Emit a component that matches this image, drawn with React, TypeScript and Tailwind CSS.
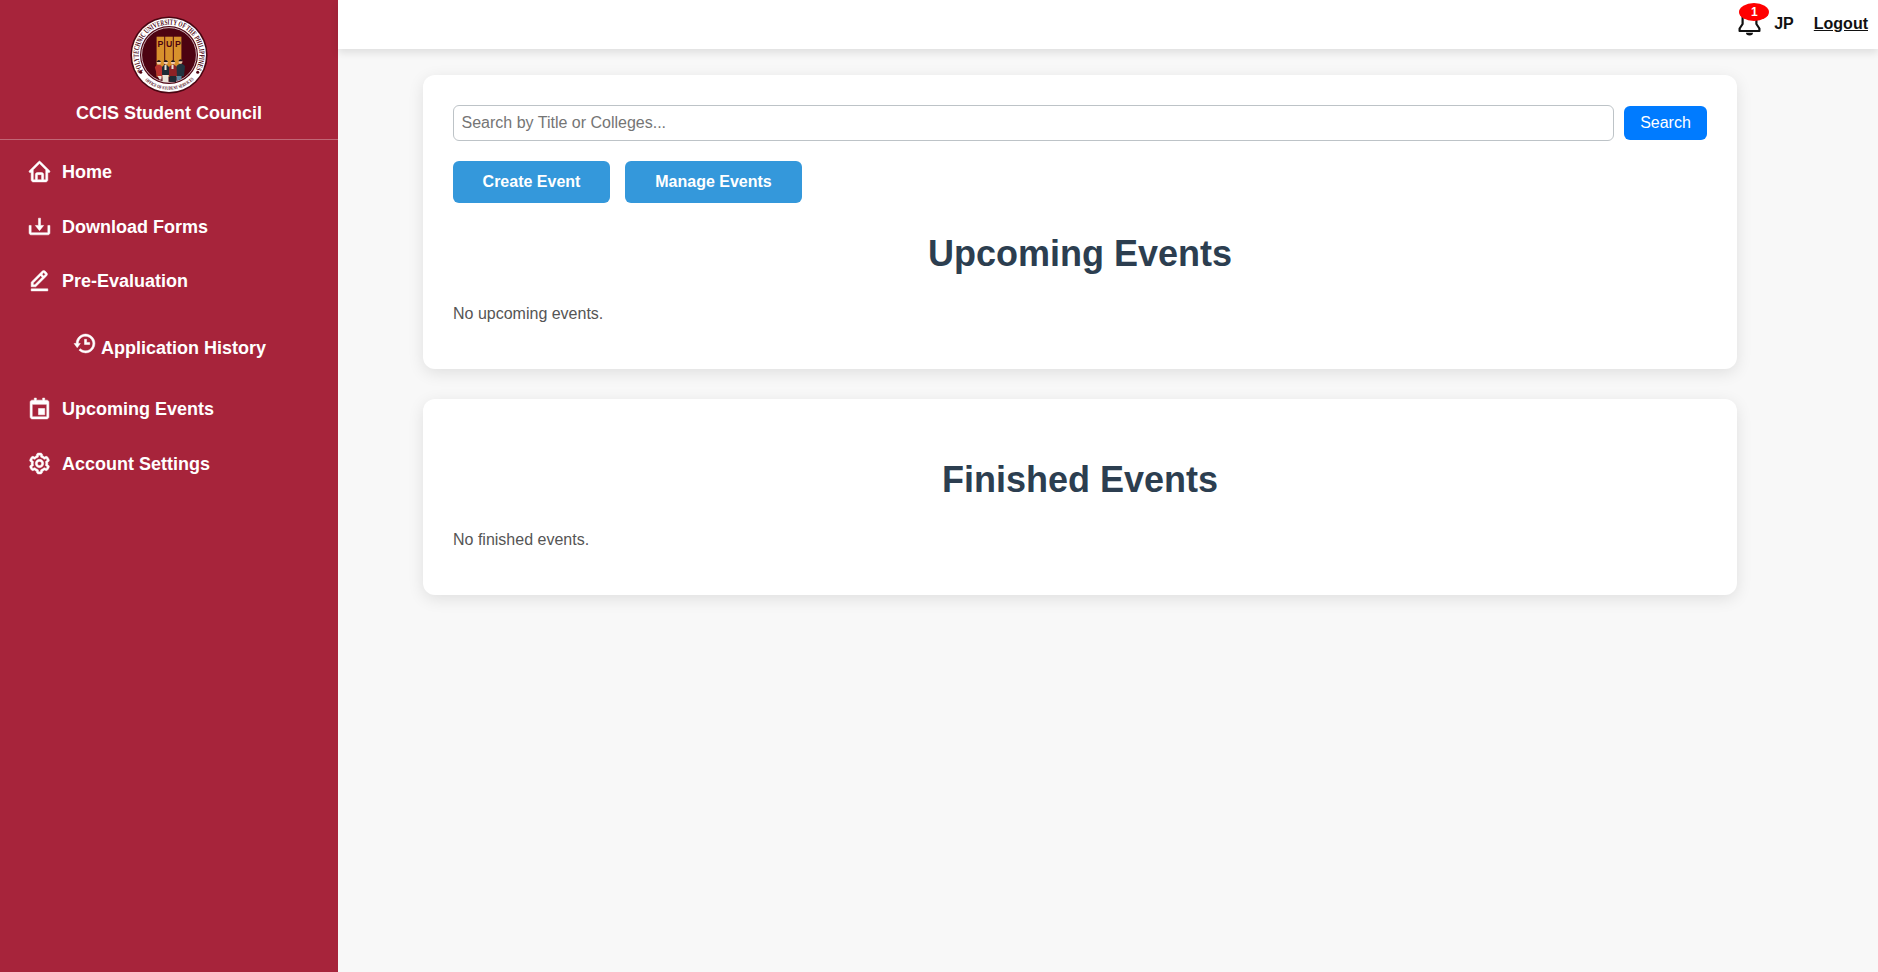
import React from "react";
import { BiHome, BiDownload, BiEditAlt, BiHistory, BiCalendarEvent, BiCog } from "react-icons/bi";

function Seal() {
  return (
    <svg viewBox="0 0 78 78" className="h-[78px] w-[78px]">
      <defs>
        <path id="arcTop" d="M 13.450 55.490 A 30.400 30.400 0 1 1 64.550 55.490" />
        <path id="arcBottom" d="M 13.540 62.760 A 34.900 34.900 0 0 0 64.460 62.760" />
      </defs>
      <circle cx="39" cy="39" r="38.6" fill="#4a0612" />
      <circle cx="39" cy="39" r="37" fill="#fff" />
      <circle cx="39" cy="39" r="29" fill="#4d0311" />
      <circle cx="39" cy="39" r="27.4" fill="none" stroke="#f3e6e8" strokeWidth="0.8" />
      <rect x="26.6" y="20.700" width="7.6" height="40" fill="#d8912c" />
      <rect x="35.2" y="20.700" width="7.6" height="40" fill="#d8912c" />
      <rect x="43.8" y="20.700" width="7.6" height="40" fill="#d8912c" />
      <text x="27.600" y="31.200" letterSpacing="2.600" fontFamily="Liberation Sans, sans-serif" fontWeight="700" fontSize="8.800" fill="#4d0311">
        PUP
      </text>
      <path d="M24.800 51q4-5 7.700 0v11l-5-1z" fill="#b8322e" />
      <path d="M32 51q3.500-5 7 0v8h-7z" fill="#1d2a34" />
      <path d="M39 51q3.800-5 8 0v9h-8z" fill="#8c2226" />
      <path d="M46.500 50q4.500-5 8.500 0l-1 10-7 1z" fill="#22333f" />
      <path d="M34.500 49h2v5h-2zM41.500 49h2v4h-2zM27.500 60h4v3.500h-2zM32.500 59h6v7h-6z" fill="#e9e4da" />
      <path d="M39.500 60h6.500v6h-6.500z" fill="#1d2a34" />
      <path d="M46.500 60h5v3l-5 2z" fill="#5a86a0" />
      <g fill="#f0c8a8">
        <circle cx="28.800" cy="46.500" r="2" />
        <circle cx="35.800" cy="46.500" r="2" />
        <circle cx="43" cy="46.500" r="2" />
        <circle cx="50.500" cy="45.800" r="2" />
      </g>
      <path d="M26.500 46q2.300-4 4.600 0zM33.500 46q2.300-4 4.600 0zM40.700 46q2.300-4 4.600 0zM48.200 45.300q2.300-4 4.600 0z" fill="#1c1317" />
      <circle cx="10.700" cy="56.300" r="1.500" fill="#4d0311" />
      <circle cx="67.700" cy="56.300" r="1.500" fill="#4d0311" />
      <g fontFamily="Liberation Serif, serif" fontWeight="700" fill="#4d0311">
        <text fontSize="7.800">
          <textPath href="#arcTop" startOffset="1" textLength="126" lengthAdjust="spacingAndGlyphs">
            POLYTECHNIC UNIVERSITY OF THE PHILIPPINES
          </textPath>
        </text>
        <text fontSize="4.800">
          <textPath href="#arcBottom" startOffset="2" textLength="54" lengthAdjust="spacingAndGlyphs">
            OFFICE OF STUDENT SERVICES
          </textPath>
        </text>
      </g>
    </svg>
  );
}

function Bell() {
  return (
    <svg viewBox="0 0 23 36" className="h-9 w-[23px]" fill="none" stroke="#111" strokeWidth="2.2">
      <path d="M4.600 24V15a6.900 6.900 0 0 1 13.800 0v9l3 4.500v2.500H1.600v-2.500z" strokeLinejoin="round" />
      <path d="M8 32.800h7a3.500 2.600 0 0 1-7 0z" fill="#111" stroke="none" />
    </svg>
  );
}

const navigation = [
  { label: "Home", Icon: BiHome },
  { label: "Download Forms", Icon: BiDownload },
  { label: "Pre-Evaluation", Icon: BiEditAlt },
  { label: "Application History", Icon: BiHistory, nested: true },
  { label: "Upcoming Events", Icon: BiCalendarEvent },
  { label: "Account Settings", Icon: BiCog },
];

function Sidebar() {
  return (
    <aside className="w-[338px] shrink-0 bg-[#a7243b] text-white">
      <div className="flex h-[140px] flex-col items-center border-b border-white/30 pt-4">
        <Seal />
        <h2 className="mt-[9px] text-[18px] leading-[21px] font-bold">CCIS Student Council</h2>
      </div>
      <nav className="pt-1">
        {navigation.map(({ label, Icon, nested }) =>
          nested ? (
            <a key={label} href="#" className="flex h-[73px] items-center pt-[6px] pl-[72px] text-[18px] leading-[21px] font-bold">
              <Icon className="mr-1 mb-2 h-[25px] w-[25px] stroke-current stroke-[0.5]" />
              <span className="pt-[2px]">{label}</span>
            </a>
          ) : (
            <a key={label} href="#" className="flex h-[54.7px] items-center pl-[27px] text-[18px] leading-[21px] font-bold">
              <Icon className="mr-[10px] h-[25px] w-[25px] stroke-current stroke-[0.5]" />
              <span className="pt-[2px]">{label}</span>
            </a>
          )
        )}
      </nav>
    </aside>
  );
}

function Header() {
  return (
    <header className="z-10 flex h-[49px] shrink-0 items-start justify-end bg-white pr-[10px] text-base leading-[18px] font-bold text-[#111] shadow-[0_4px_8px_rgba(0,0,0,0.1)]">
      <div className="relative mr-[13px]">
        <Bell />
        <span className="absolute top-[3px] left-px flex h-[18px] w-[30px] items-center justify-center rounded-[50%] bg-[#ff0000] text-[12px] text-white">
          1
        </span>
      </div>
      <span className="mt-[15px] mr-[20px]">JP</span>
      <a href="#" className="mt-[15px] underline">Logout</a>
    </header>
  );
}

function EventSection({ title, empty, children }: { title: string; empty: string; children?: React.ReactNode }) {
  return (
    <section className="rounded-xl bg-white px-[30px] pt-[30px] pb-[46px] shadow-[0_4px_16px_rgba(0,0,0,0.1)]">
      {children}
      <h1 className="mt-[30px] text-center text-[36px] leading-[41px] font-bold text-[#2c3e50]">{title}</h1>
      <p className="mt-[31px] text-base leading-[18px] text-[#555]">{empty}</p>
    </section>
  );
}

export default function App() {
  return (
    <div className="flex h-screen overflow-hidden bg-[#f8f8f8] font-['Liberation_Sans',Arial,sans-serif]">
      <Sidebar />
      <div className="flex flex-1 flex-col">
        <Header />
        <main className="flex flex-col gap-[30px] pt-[26px] pr-[141px] pl-[85px]">
          <EventSection title="Upcoming Events" empty="No upcoming events.">
            <div className="flex items-center gap-[10px]">
              <input
                className="h-9 flex-1 rounded-[6px] border border-[#bdc3c7] px-[7.5px] text-base placeholder:text-[#757575]"
                placeholder="Search by Title or Colleges..."
              />
              <button className="h-[34px] w-[83px] rounded-[6px] bg-[#007bff] text-base text-white">Search</button>
            </div>
            <div className="mt-5 flex gap-[15px]">
              <button className="h-[42px] w-[157px] rounded-[6px] bg-[#3498db] text-base font-bold text-white">Create Event</button>
              <button className="h-[42px] w-[177px] rounded-[6px] bg-[#3498db] text-base font-bold text-white">Manage Events</button>
            </div>
          </EventSection>
          <EventSection title="Finished Events" empty="No finished events." />
        </main>
      </div>
    </div>
  );
}
